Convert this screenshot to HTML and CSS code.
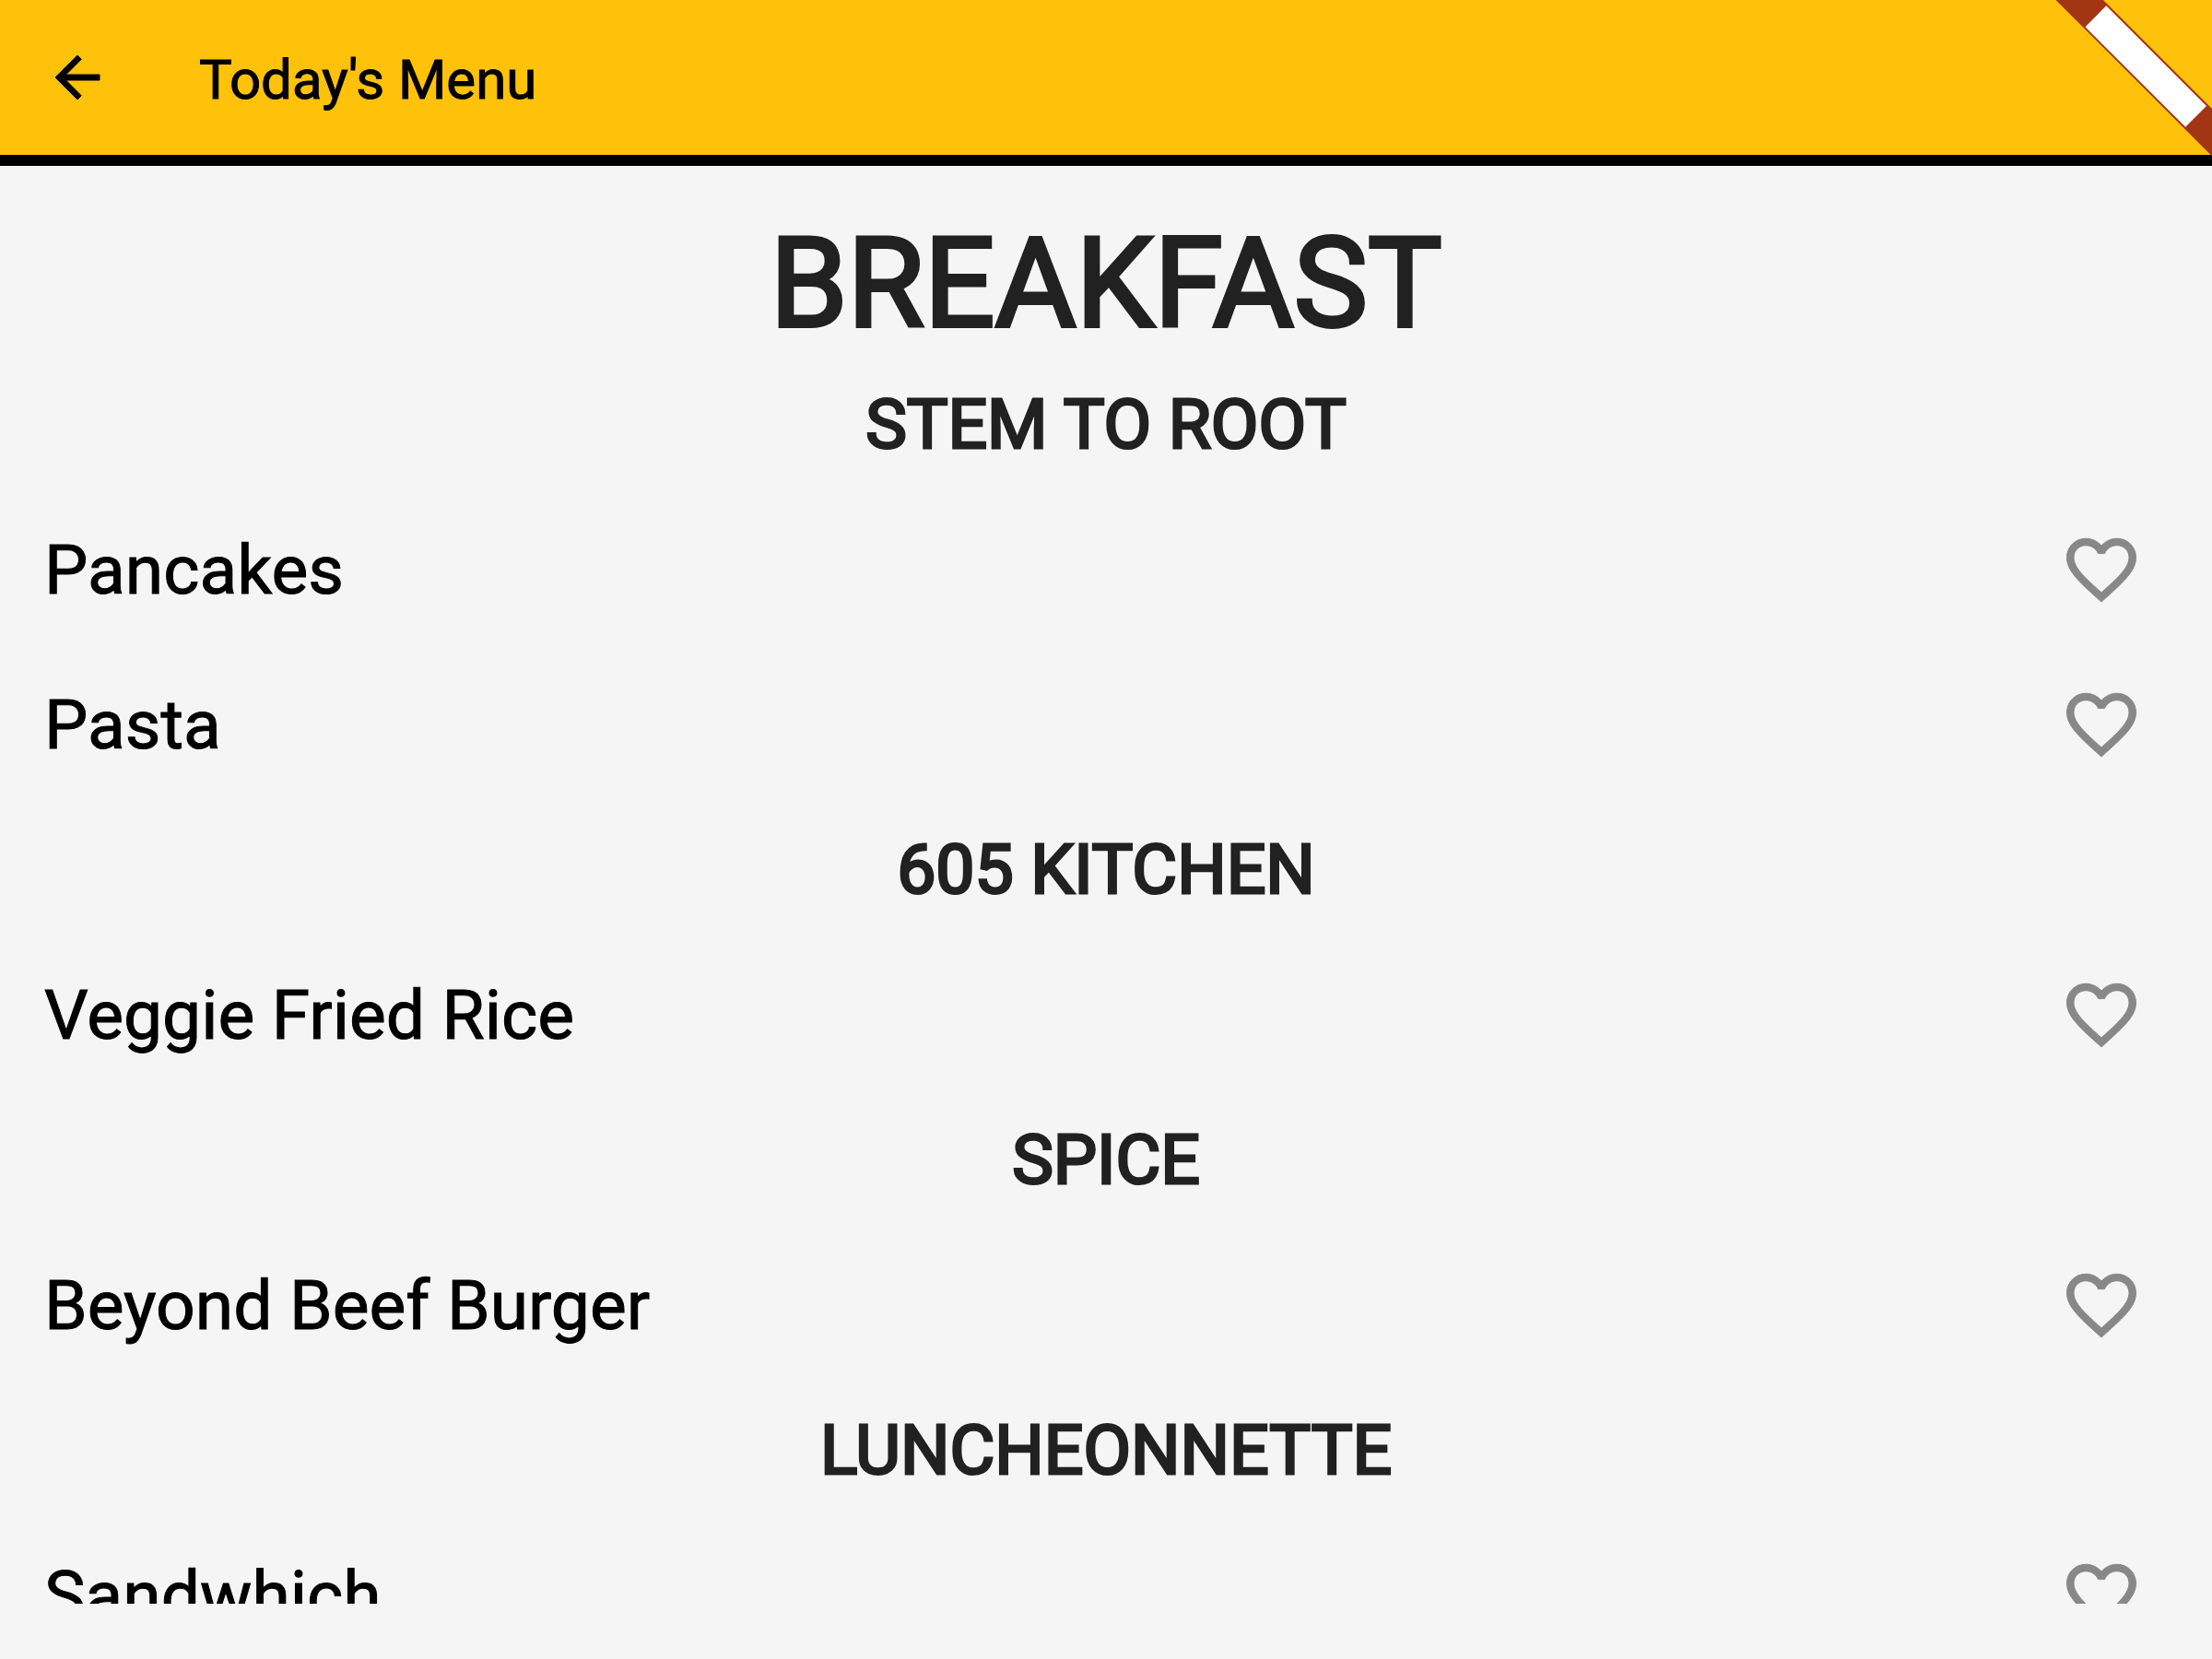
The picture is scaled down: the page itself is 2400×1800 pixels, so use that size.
FILE: index.html
```html
<!DOCTYPE html>
<html lang="en">
<head>
<meta charset="utf-8">
<meta name="viewport" content="width=device-width, initial-scale=1">
<title>Today's Menu</title>
<link rel="stylesheet" href="styles.css">
</head>
<body>
<svg class="defs" width="0" height="0" aria-hidden="true">
  <symbol id="heart" viewBox="0 0 24 24">
    <path d="M16.5 3c-1.74 0-3.41.81-4.5 2.09C10.91 3.81 9.24 3 7.5 3 4.42 3 2 5.42 2 8.5c0 3.78 3.4 6.86 8.55 11.54L12 21.35l1.45-1.32C18.6 15.36 22 12.28 22 8.5 22 5.42 19.58 3 16.5 3zm-4.4 15.55l-.1.1-.1-.1C7.14 14.24 4 11.39 4 8.5 4 6.5 5.5 5 7.5 5c1.54 0 3.04.99 3.57 2.36h1.87C13.46 5.99 14.96 5 16.5 5c2 0 3.5 1.5 3.5 3.5 0 2.89-3.14 5.74-7.9 10.05z"/>
  </symbol>
</svg>
<header class="app-bar">
  <button class="icon-button back" type="button" aria-label="Back">
    <svg viewBox="0 0 24 24" aria-hidden="true"><path d="M20 11H7.83l5.59-5.59L12 4l-8 8 8 8 1.41-1.41L7.83 13H20v-2z"/></svg>
  </button>
  <h1 class="app-title">Today's Menu</h1>
  <svg class="ribbon" viewBox="0 0 240 180" aria-hidden="true">
    <path class="ribbon-band" d="M70.5 0H122L240 118V169.500z"/>
    <path class="ribbon-label" d="M125.200 6.200L102.500 29.200L211.200 137.800L234 115z"/>
  </svg>
</header>
<main class="menu">
  <h2 class="meal">BREAKFAST</h2>
  <section>
    <h3 class="station">STEM TO ROOT</h3>
    <ul class="dishes">
      <li class="dish"><span>Pancakes</span><button class="icon-button favorite" type="button" aria-label="Favorite Pancakes"><svg aria-hidden="true"><use href="#heart"/></svg></button></li>
      <li class="dish"><span>Pasta</span><button class="icon-button favorite" type="button" aria-label="Favorite Pasta"><svg aria-hidden="true"><use href="#heart"/></svg></button></li>
    </ul>
  </section>
  <section>
    <h3 class="station">605 KITCHEN</h3>
    <ul class="dishes">
      <li class="dish"><span>Veggie Fried Rice</span><button class="icon-button favorite" type="button" aria-label="Favorite Veggie Fried Rice"><svg aria-hidden="true"><use href="#heart"/></svg></button></li>
    </ul>
  </section>
  <section>
    <h3 class="station">SPICE</h3>
    <ul class="dishes">
      <li class="dish"><span>Beyond Beef Burger</span><button class="icon-button favorite" type="button" aria-label="Favorite Beyond Beef Burger"><svg aria-hidden="true"><use href="#heart"/></svg></button></li>
    </ul>
  </section>
  <section>
    <h3 class="station">LUNCHEONNETTE</h3>
    <ul class="dishes">
      <li class="dish"><span>Sandwhich</span><button class="icon-button favorite" type="button" aria-label="Favorite Sandwhich"><svg aria-hidden="true"><use href="#heart"/></svg></button></li>
    </ul>
  </section>
</main>
</body>
</html>
```
FILE: styles.css
```css
* {
  box-sizing: border-box;
}

body {
  display: flex;
  flex-direction: column;
  height: 100vh;
  margin: 0;
  padding-bottom: 60px;
  background: #f5f5f5;
  color: #000;
  font-family: Roboto, "Liberation Sans", sans-serif;
}

h1,
h2,
h3,
ul {
  margin: 0;
  padding: 0;
  font-weight: 400;
}

.defs {
  position: absolute;
}

.app-bar {
  position: relative;
  display: flex;
  flex: none;
  align-items: center;
  gap: 48px;
  height: 180px;
  padding: 0 48px 0 0;
  border-bottom: 12px solid #000;
  background: #ffc20a;
}

.icon-button {
  display: flex;
  flex: none;
  align-items: center;
  justify-content: center;
  padding: 0;
  border: 0;
  background: none;
  cursor: pointer;
}

.icon-button svg {
  display: block;
  width: 100%;
  height: 100%;
  fill: currentColor;
}

.icon-button path {
  stroke: currentColor;
  stroke-width: 1px;
  vector-effect: non-scaling-stroke;
}

#heart path {
  stroke: currentColor;
  stroke-width: 1px;
  vector-effect: non-scaling-stroke;
}

.back {
  width: 168px;
  height: 168px;
  padding: 48px;
  color: #000;
}

.app-title {
  padding-top: 5px;
  font-size: 60px;
  line-height: 72px;
  -webkit-text-stroke: 1px #000;
}

.ribbon {
  position: absolute;
  top: 0;
  right: 0;
  width: 240px;
  height: 180px;
}

.ribbon-band {
  fill: #a23614;
}

.ribbon-label {
  fill: #fff;
}

.menu {
  flex: 1;
  min-height: 0;
  padding-top: 49px;
  overflow: hidden;
}

/* Headings are the regular face thickened by an outline. */
.meal,
.station {
  color: #212121;
  text-align: center;
}

.meal {
  font-size: 135px;
  line-height: 158px;
  -webkit-text-stroke: 4px #212121;
}

.station {
  padding: 30px 0;
  font-size: 75px;
  line-height: 87px;
  -webkit-text-stroke: 3px #212121;
}

.dishes {
  list-style: none;
}

.dish {
  display: flex;
  align-items: center;
  justify-content: space-between;
  height: 168px;
  padding: 0 48px;
  font-size: 75px;
  line-height: 88px;
  -webkit-text-stroke: 1px #000;
}

.favorite {
  width: 144px;
  height: 144px;
  padding: 27px;
  color: #888;
}
```
